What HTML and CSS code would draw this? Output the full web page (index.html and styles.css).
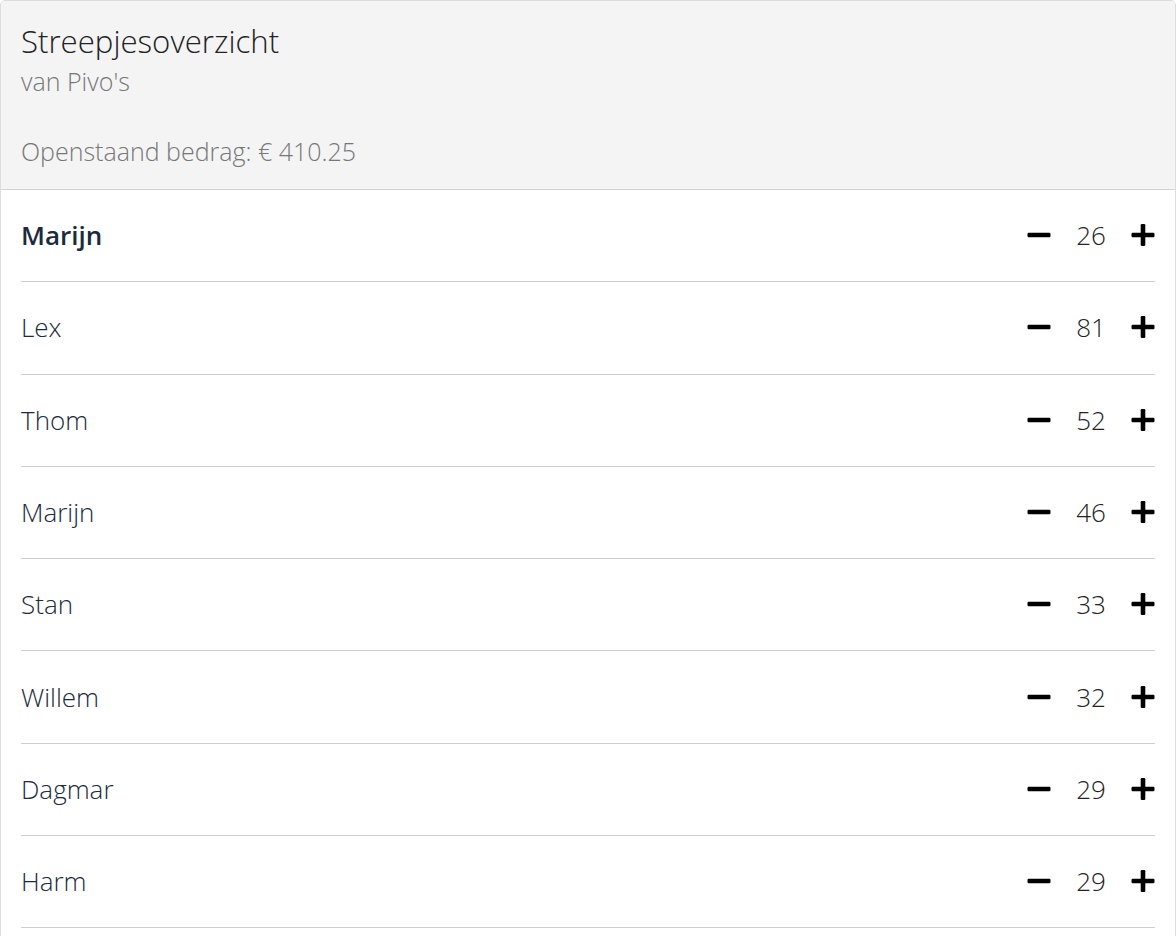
FILE: index.html
```html
<!DOCTYPE html>
<html lang="nl">
<head>
<meta charset="utf-8">
<title>Streepjesoverzicht</title>
<link rel="stylesheet" href="styles.css">
</head>
<body>
<div class="card">
  <div class="card-header">
    <h1 class="title">Streepjesoverzicht</h1>
    <div class="subtitle">van Pivo's</div>
    <div class="amount">Openstaand bedrag: € 410.25</div>
  </div>
  <ul class="list">
    <li class="row current"><span class="name">Marijn</span><span class="counter"><button class="btn"><svg viewBox="0 0 24 24" width="24" height="24"><rect x="0.5" y="9.7" width="23" height="4.6" rx="1.2"/></svg></button><span class="count">26</span><button class="btn"><svg viewBox="0 0 24 24" width="24" height="24"><rect x="0.5" y="9.7" width="23" height="4.6" rx="1.2"/><rect x="9.7" y="1" width="4.6" height="22" rx="1.2"/></svg></button></span></li>
    <li class="row"><span class="name">Lex</span><span class="counter"><button class="btn"><svg viewBox="0 0 24 24" width="24" height="24"><rect x="0.5" y="9.7" width="23" height="4.6" rx="1.2"/></svg></button><span class="count">81</span><button class="btn"><svg viewBox="0 0 24 24" width="24" height="24"><rect x="0.5" y="9.7" width="23" height="4.6" rx="1.2"/><rect x="9.7" y="1" width="4.6" height="22" rx="1.2"/></svg></button></span></li>
    <li class="row"><span class="name">Thom</span><span class="counter"><button class="btn"><svg viewBox="0 0 24 24" width="24" height="24"><rect x="0.5" y="9.7" width="23" height="4.6" rx="1.2"/></svg></button><span class="count">52</span><button class="btn"><svg viewBox="0 0 24 24" width="24" height="24"><rect x="0.5" y="9.7" width="23" height="4.6" rx="1.2"/><rect x="9.7" y="1" width="4.6" height="22" rx="1.2"/></svg></button></span></li>
    <li class="row"><span class="name">Marijn</span><span class="counter"><button class="btn"><svg viewBox="0 0 24 24" width="24" height="24"><rect x="0.5" y="9.7" width="23" height="4.6" rx="1.2"/></svg></button><span class="count">46</span><button class="btn"><svg viewBox="0 0 24 24" width="24" height="24"><rect x="0.5" y="9.7" width="23" height="4.6" rx="1.2"/><rect x="9.7" y="1" width="4.6" height="22" rx="1.2"/></svg></button></span></li>
    <li class="row"><span class="name">Stan</span><span class="counter"><button class="btn"><svg viewBox="0 0 24 24" width="24" height="24"><rect x="0.5" y="9.7" width="23" height="4.6" rx="1.2"/></svg></button><span class="count">33</span><button class="btn"><svg viewBox="0 0 24 24" width="24" height="24"><rect x="0.5" y="9.7" width="23" height="4.6" rx="1.2"/><rect x="9.7" y="1" width="4.6" height="22" rx="1.2"/></svg></button></span></li>
    <li class="row"><span class="name">Willem</span><span class="counter"><button class="btn"><svg viewBox="0 0 24 24" width="24" height="24"><rect x="0.5" y="9.7" width="23" height="4.6" rx="1.2"/></svg></button><span class="count">32</span><button class="btn"><svg viewBox="0 0 24 24" width="24" height="24"><rect x="0.5" y="9.7" width="23" height="4.6" rx="1.2"/><rect x="9.7" y="1" width="4.6" height="22" rx="1.2"/></svg></button></span></li>
    <li class="row"><span class="name">Dagmar</span><span class="counter"><button class="btn"><svg viewBox="0 0 24 24" width="24" height="24"><rect x="0.5" y="9.7" width="23" height="4.6" rx="1.2"/></svg></button><span class="count">29</span><button class="btn"><svg viewBox="0 0 24 24" width="24" height="24"><rect x="0.5" y="9.7" width="23" height="4.6" rx="1.2"/><rect x="9.7" y="1" width="4.6" height="22" rx="1.2"/></svg></button></span></li>
    <li class="row"><span class="name">Harm</span><span class="counter"><button class="btn"><svg viewBox="0 0 24 24" width="24" height="24"><rect x="0.5" y="9.7" width="23" height="4.6" rx="1.2"/></svg></button><span class="count">29</span><button class="btn"><svg viewBox="0 0 24 24" width="24" height="24"><rect x="0.5" y="9.7" width="23" height="4.6" rx="1.2"/><rect x="9.7" y="1" width="4.6" height="22" rx="1.2"/></svg></button></span></li>
  </ul>
</div>
</body>
</html>
```
FILE: styles.css
```css
* { box-sizing: border-box; }
html, body { margin: 0; padding: 0; background: #fff; }
body {
  font-family: "Open Sans", "Liberation Sans", sans-serif;
  font-weight: 300;
  color: #222;
}
.card {
  border: 1px solid #dcdcdc;
  border-radius: 5px;
  overflow: hidden;
  background: #fff;
  min-height: 980px;
}
.card-header {
  background: #f4f4f4;
  border-bottom: 1px solid #d2d2d2;
  padding: 23px 20px 20px;
}
.title {
  margin: 0;
  font-size: 31.2px;
  font-weight: 300;
  line-height: 34px;
  color: #222;
}
.subtitle {
  margin-top: 5px;
  font-size: 25px;
  line-height: 36px;
  color: #777;
}
.amount {
  margin-top: 34px;
  font-size: 25px;
  line-height: 36px;
  color: #777;
}
.list {
  list-style: none;
  margin: 0;
  padding: 0 20px;
}
.row {
  display: flex;
  align-items: center;
  justify-content: space-between;
  height: 92.29px;
  padding-bottom: 1px;
  border-bottom: 1px solid #cfcfcf;
  font-size: 26px;
  line-height: 36px;
}
.name { color: #1b2a3c; }
.current .name { font-weight: 600; }
.counter {
  display: flex;
  align-items: center;
}
.btn {
  display: flex;
  align-items: center;
  justify-content: center;
  width: 24px;
  height: 24px;
  padding: 0;
  margin: 0;
  border: 0;
  background: none;
  color: #000;
}
.btn svg { display: block; fill: #000; }
.count {
  width: 80px;
  text-align: center;
  color: #222;
}
```
